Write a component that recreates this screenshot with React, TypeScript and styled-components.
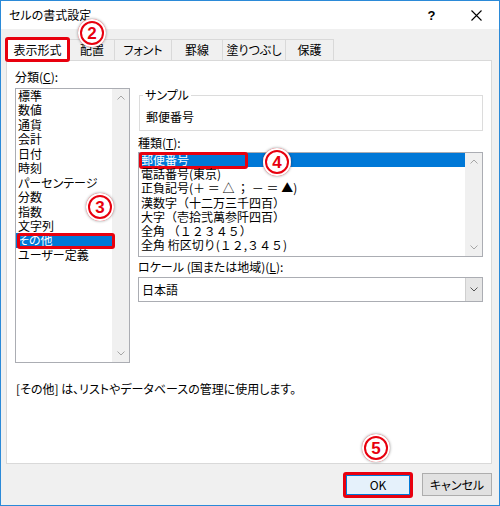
import React from "react";
import styled, { createGlobalStyle } from "styled-components";

const GlobalStyle = createGlobalStyle`
  html, body {
    margin: 0;
    padding: 0;
    background: #fff;
  }
  body {
    font-family: "Noto Sans CJK JP", "Noto Sans", sans-serif;
    font-size: 12px;
    color: #000;
    font-feature-settings: "palt";
  }
  * {
    box-sizing: border-box;
  }
`;

const RED = "#e8000e";
const BLUE = "#0078d7";

const Window = styled.div`
  position: relative;
  width: 500px;
  height: 506px;
  border: 1px solid #2b8ad8;
  background: #f0f0f0;
  display: flex;
  flex-direction: column;
`;

const TitleBar = styled.div`
  height: 28px;
  flex: none;
  background: #fff;
  display: flex;
  align-items: center;
  padding-left: 8px;
`;

const Title = styled.span`
  flex: 1;
  line-height: 16px;
`;

const TitleButton = styled.div`
  width: 45px;
  height: 28px;
  display: flex;
  align-items: center;
  justify-content: center;
  font-family: "Liberation Sans", sans-serif;
  font-weight: bold;
  font-size: 13px;
`;

const Body = styled.div`
  flex: 1;
  display: flex;
  flex-direction: column;
  padding: 8px 7px 0 5px;
`;

const TabRow = styled.div`
  height: 23px;
  display: flex;
  align-items: flex-end;
`;

const Tab = styled.div<{ $w: number; $active?: boolean }>`
  width: ${({ $w }) => $w}px;
  height: ${({ $active }) => ($active ? 25 : 21)}px;
  margin-bottom: ${({ $active }) => ($active ? -2 : 0)}px;
  margin-left: ${({ $active }) => ($active ? -1 : 0)}px;
  position: relative;
  z-index: ${({ $active }) => ($active ? 2 : 0)};
  display: flex;
  align-items: center;
  justify-content: center;
  line-height: 16px;
  background: ${({ $active }) => ($active ? "#fff" : "#f0f0f0")};
  border: ${({ $active }) => ($active ? `3px solid ${RED}` : "none")};
  border-radius: ${({ $active }) => ($active ? "3px" : "0")};
  ${({ $active }) =>
    $active ? "" : "border-top: 1px solid #d9d9d9; border-right: 1px solid #d9d9d9;"}
`;

const Panel = styled.div`
  height: 404px;
  flex: none;
  position: relative;
  z-index: 1;
  background: #fff;
  border: 1px solid #d9d9d9;
  padding: 8px 8px 0 8px;
  display: flex;
  flex-direction: column;
`;

const Columns = styled.div`
  display: flex;
  gap: 8px;
`;

const LeftColumn = styled.div`
  width: 116px;
  display: flex;
  flex-direction: column;
`;

const RightColumn = styled.div`
  width: 346px;
  display: flex;
  flex-direction: column;
`;

const Label = styled.div<{ $mt?: number }>`
  line-height: 16px;
  margin-top: ${({ $mt }) => $mt ?? 0}px;
  white-space: nowrap;
`;

const ListBox = styled.div<{ $h: number; $mt: number }>`
  height: ${({ $h }) => $h}px;
  margin-top: ${({ $mt }) => $mt}px;
  border: 1px solid #abadb3;
  background: #fff;
  display: flex;
`;

const Items = styled.div`
  flex: 1;
  display: flex;
  flex-direction: column;
  min-width: 0;
`;

const Item = styled.div<{ $h: number; $selected?: boolean; $palt?: boolean }>`
  position: relative;
  height: ${({ $h }) => $h}px;
  line-height: ${({ $h }) => $h}px;
  padding-left: 2px;
  white-space: nowrap;
  font-feature-settings: ${({ $palt }) => ($palt ? '"palt"' : "normal")};
  background: ${({ $selected }) => ($selected ? BLUE : "transparent")};
  color: ${({ $selected }) => ($selected ? "#fff" : "#000")};
`;

const Marker = styled.span<{ $left: number; $width: number; $top: number; $bottom: number }>`
  position: absolute;
  left: ${({ $left }) => $left}px;
  width: ${({ $width }) => $width}px;
  top: ${({ $top }) => $top}px;
  bottom: ${({ $bottom }) => $bottom}px;
  border: 3px solid ${RED};
  border-radius: 3px;
  pointer-events: none;
`;

const ScrollBar = styled.div`
  width: 17px;
  flex: none;
  background: #f0f0f0;
  display: flex;
  flex-direction: column;
  justify-content: space-between;
`;

const ScrollArrow = styled.div`
  height: 17px;
  display: flex;
  align-items: center;
  justify-content: center;
`;

const GroupBox = styled.fieldset`
  margin: 18px 0 0 1px;
  width: 344px;
  border: 1px solid #dcdcdc;
  padding: 0 3px 0 3px;
  min-width: 0;
`;

const Legend = styled.legend`
  padding: 0 2px;
  line-height: 16px;
`;

const SampleText = styled.div`
  padding: 6px 0 5px 3px;
  line-height: 16px;
`;

const Combo = styled.div`
  margin-top: 2px;
  height: 25px;
  border: 1px solid #abadb3;
  background: #fff;
  display: flex;
`;

const ComboValue = styled.div`
  flex: 1;
  padding-left: 3px;
  display: flex;
  align-items: center;
`;

const ComboButton = styled.div`
  width: 17px;
  background: #e6e6e6;
  border-left: 1px solid #cfcfcf;
  display: flex;
  align-items: center;
  justify-content: center;
`;

const Description = styled.div`
  margin-top: 18px;
  padding-left: 1px;
  line-height: 16px;
`;

const Footer = styled.div`
  height: 41px;
  display: flex;
  align-items: center;
  justify-content: flex-end;
  gap: 9px;
  padding-right: 0;
`;

const Button = styled.div<{ $primary?: boolean }>`
  width: 70px;
  height: ${({ $primary }) => ($primary ? 26 : 23)}px;
  display: flex;
  align-items: center;
  justify-content: center;
  line-height: 16px;
  background: ${({ $primary }) => ($primary ? "#e5f1fb" : "#e1e1e1")};
  border: ${({ $primary }) => ($primary ? `3px solid ${RED}` : "1px solid #adadad")};
  border-radius: ${({ $primary }) => ($primary ? "3px" : "0")};
  box-shadow: ${({ $primary }) => ($primary ? `inset 0 0 0 1px ${BLUE}` : "none")};
`;

const Badge = styled.div<{ $x: number; $y: number }>`
  position: absolute;
  left: ${({ $x }) => $x - 15}px;
  top: ${({ $y }) => $y - 15}px;
  z-index: 5;
  width: 28px;
  height: 28px;
  border-radius: 50%;
  background: #fff;
  box-shadow: inset 0 0 0 2px #fff, inset 0 0 0 4px ${RED}, 0 0 3px rgba(0, 0, 0, 0.45);
  display: flex;
  align-items: center;
  justify-content: center;
  color: ${RED};
  font-family: "Liberation Sans", "DejaVu Sans", sans-serif;
  font-weight: bold;
  font-size: 17px;
  line-height: 1;
`;

const Chevron = ({ up, color = "#a6a6a6" }: { up?: boolean; color?: string }) => (
  <svg width="8" height="5" viewBox="0 0 8 5">
    <path
      d={up ? "M0.5 4.5 L4 1 L7.5 4.5" : "M0.5 0.5 L4 4 L7.5 0.5"}
      fill="none"
      stroke={color}
      strokeWidth="1"
    />
  </svg>
);

const categories = [
  "標準",
  "数値",
  "通貨",
  "会計",
  "日付",
  "時刻",
  "パーセンテージ",
  "分数",
  "指数",
  "文字列",
  "その他",
  "ユーザー定義",
];

const types = [
  "郵便番号",
  "電話番号(東京)",
  "正負記号(＋ ＝ △ ； － ＝ ▲)",
  "漢数字（十二万三千四百）",
  "大字（壱拾弐萬参阡四百）",
  "全角 （１２３４５）",
  "全角 桁区切り(１２,３４５)",
];

const tabs: { label: string; w: number }[] = [
  { label: "表示形式", w: 65 },
  { label: "配置", w: 45 },
  { label: "フォント", w: 57 },
  { label: "罫線", w: 51 },
  { label: "塗りつぶし", w: 63 },
  { label: "保護", w: 48 },
];

export default function App() {
  return (
    <>
      <GlobalStyle />
      <Window>
        <TitleBar>
          <Title>セルの書式設定</Title>
          <TitleButton>?</TitleButton>
          <TitleButton>
            <svg width="11" height="11" viewBox="0 0 11 11">
              <path d="M0.5 0.5 L10.5 10.5 M10.5 0.5 L0.5 10.5" stroke="#000" strokeWidth="1.1" />
            </svg>
          </TitleButton>
        </TitleBar>
        <Body>
          <TabRow>
            {tabs.map((t, i) => (
              <Tab key={t.label} $w={t.w} $active={i === 0}>
                {t.label}
              </Tab>
            ))}
          </TabRow>
          <Panel>
            <Columns>
              <LeftColumn>
                <Label>
                  分類(<u>C</u>):
                </Label>
                <ListBox $h={275} $mt={3}>
                  <Items>
                    {categories.map((c) => (
                      <Item key={c} $h={14.45} $palt $selected={c === "その他"}>
                        {c}
                        {c === "その他" && <Marker $left={1} $width={98} $top={0} $bottom={-1} />}
                      </Item>
                    ))}
                  </Items>
                  <ScrollBar>
                    <ScrollArrow>
                      <Chevron up />
                    </ScrollArrow>
                    <ScrollArrow>
                      <Chevron />
                    </ScrollArrow>
                  </ScrollBar>
                </ListBox>
              </LeftColumn>
              <RightColumn>
                <GroupBox>
                  <Legend>サンプル</Legend>
                  <SampleText>郵便番号</SampleText>
                </GroupBox>
                <Label $mt={4}>
                  種類(<u>T</u>):
                </Label>
                <ListBox $h={105} $mt={1}>
                  <Items>
                    {types.map((t, i) => (
                      <Item key={t} $h={14.2} $selected={i === 0}>
                        {t}
                        {i === 0 && <Marker $left={0} $width={109} $top={-1} $bottom={-2} />}
                      </Item>
                    ))}
                  </Items>
                  <ScrollBar>
                    <ScrollArrow>
                      <Chevron up />
                    </ScrollArrow>
                    <ScrollArrow>
                      <Chevron />
                    </ScrollArrow>
                  </ScrollBar>
                </ListBox>
                <Label $mt={2}>
                  ロケール (国または地域)(<u>L</u>):
                </Label>
                <Combo>
                  <ComboValue>日本語</ComboValue>
                  <ComboButton>
                    <Chevron color="#555" />
                  </ComboButton>
                </Combo>
              </RightColumn>
            </Columns>
            <Description>[その他] は、リストやデータベースの管理に使用します。</Description>
          </Panel>
          <Footer>
            <Button $primary>OK</Button>
            <Button>キャンセル</Button>
          </Footer>
        </Body>
        <Badge $x={92} $y={33}>2</Badge>
        <Badge $x={100} $y={207}>3</Badge>
        <Badge $x={277} $y={162}>4</Badge>
        <Badge $x={376} $y={448}>5</Badge>
      </Window>
    </>
  );
}
